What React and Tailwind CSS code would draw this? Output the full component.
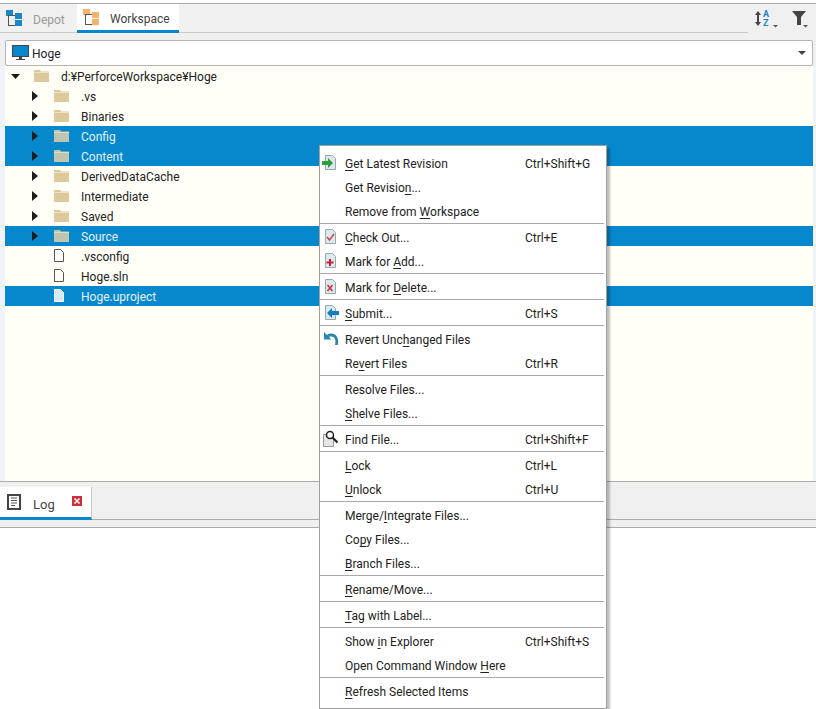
import React from "react";

/* tree rows */
const treeRows = [
  { name: ".vs", type: "folder" },
  { name: "Binaries", type: "folder" },
  { name: "Config", type: "folder", selected: true },
  { name: "Content", type: "folder", selected: true },
  { name: "DerivedDataCache", type: "folder" },
  { name: "Intermediate", type: "folder" },
  { name: "Saved", type: "folder" },
  { name: "Source", type: "folder", selected: true },
  { name: ".vsconfig", type: "file" },
  { name: "Hoge.sln", type: "file" },
  { name: "Hoge.uproject", type: "file", selected: true },
];

/* menu: "&" marks the underlined letter, null is a separator */
const menuItems = [
  { label: "&Get Latest Revision", keys: "Ctrl+Shift+G", icon: "latest" },
  { label: "Get Revisio&n..." },
  { label: "Remove from &Workspace" },
  null,
  { label: "&Check Out...", keys: "Ctrl+E", icon: "checkout" },
  { label: "Mark for &Add...", icon: "add" },
  null,
  { label: "Mark for &Delete...", icon: "delete" },
  null,
  { label: "&Submit...", keys: "Ctrl+S", icon: "submit" },
  null,
  { label: "Revert Unc&hanged Files", icon: "undo" },
  { label: "Re&vert Files", keys: "Ctrl+R" },
  null,
  { label: "Resolve Files..." },
  { label: "&Shelve Files..." },
  null,
  { label: "Find File...", keys: "Ctrl+Shift+F", icon: "find" },
  null,
  { label: "&Lock", keys: "Ctrl+L" },
  { label: "&Unlock", keys: "Ctrl+U" },
  null,
  { label: "Merge/&Integrate Files..." },
  { label: "Co&py Files..." },
  { label: "&Branch Files..." },
  null,
  { label: "&Rename/Move..." },
  null,
  { label: "&Tag with Label..." },
  null,
  { label: "Show &in Explorer", keys: "Ctrl+Shift+S" },
  { label: "Open Command Window &Here" },
  null,
  { label: "&Refresh Selected Items" },
];

function Mnemonic({ text }) {
  const at = text.indexOf("&");
  if (at < 0) return <span>{text}</span>;
  return (
    <span>
      {text.slice(0, at)}
      <u className="underline-offset-2">{text[at + 1]}</u>
      {text.slice(at + 2)}
    </span>
  );
}

function TreeIcon({ color }) {
  return (
    <svg width="17" height="17" viewBox="0 0 17 17" className="shrink-0">
      <rect x="0" y="0" width="7" height="6" fill={color} />
      <rect x="2" y="6" width="1" height="10" fill="#555" />
      <rect x="2" y="5" width="7" height="1" fill="#555" />
      <rect x="2" y="15" width="7" height="1" fill="#555" />
      <rect x="9" y="3" width="7" height="6" fill={color} />
      <rect x="9" y="10" width="7" height="6" fill={color} />
    </svg>
  );
}

function Folder({ selected }) {
  return (
    <svg width="15" height="12" viewBox="0 0 15 12" className="shrink-0">
      <path d="M0 0h6l1 1.500h8V12H0z" fill={selected ? "#c0c5b0" : "#dcc99c"} />
      <rect x="0" y="2" width="15" height="1" fill={selected ? "#d8dccb" : "#efe3c4"} />
    </svg>
  );
}

function FileIcon({ selected }) {
  return (
    <svg width="10" height="13" viewBox="0 0 10 13" className="shrink-0">
      <path
        d="M.5.5h6l3 3v9h-9z"
        fill={selected ? "#d6ebfa" : "#fffff8"}
        stroke={selected ? "#f2f8fc" : "#555"}
      />
    </svg>
  );
}

function Page({ children }) {
  return (
    <>
      <path d="M3.500 1.500h7l3 3v11h-10z" fill="#dbe8ee" stroke="#9aa9ae" />
      {children}
    </>
  );
}

function MenuIcon({ name }) {
  return (
    <svg width="18" height="18" viewBox="0 0 18 18" className="shrink-0">
      {name === "latest" && (
        <Page>
          <path d="M0 7h6V4l5 5-5 5v-3H0z" fill="#2e9e3a" />
        </Page>
      )}
      {name === "checkout" && (
        <Page>
          <path d="M5 9l2.500 3L12 6" fill="none" stroke="#c94a4a" strokeWidth="1.600" />
        </Page>
      )}
      {name === "add" && (
        <Page>
          <path d="M7 7h2v2.500h2.500v2H9V14H7v-2.500H4.500v-2H7z" fill="#cc2030" />
        </Page>
      )}
      {name === "delete" && (
        <Page>
          <path d="M5.500 7l5 6m0-6l-5 6" stroke="#cc3038" strokeWidth="1.500" fill="none" />
        </Page>
      )}
      {name === "submit" && (
        <Page>
          <path d="M17 7h-7V4L5 9l5 5v-3h7z" fill="#1180c0" />
        </Page>
      )}
      {name === "undo" && (
        <path
          d="M2 2v7.500h7.500L7 7c2.500-1 5-.2 6 2 .6 1.500.6 3.500 0 6h2.800c.8-3.500.5-6.800-1.500-9.300C12 3 8 2.800 5 5z"
          fill="#2a86ad"
        />
      )}
      {name === "find" && (
        <>
          <path d="M1.500 4.500h10v12h-10z" fill="#e6e6e6" stroke="#999" />
          <circle cx="8" cy="5" r="3.500" fill="#fff" stroke="#222" strokeWidth="1.500" />
          <path d="M10.500 7.500l5 5" stroke="#222" strokeWidth="2.200" />
        </>
      )}
    </svg>
  );
}

function ContextMenu() {
  return (
    <div className="absolute left-[319px] top-[145px] w-[288px] h-[564px] overflow-hidden bg-white border border-[#a0a0a0] py-[5px] text-[12px] text-[#222] shadow-[3px_3px_2px_rgba(0,0,0,0.25)]">
      {menuItems.map((item, i) =>
        item === null ? (
          <div key={i} className="h-[2px] mr-[2px] border-t border-[#a9a9a9]" />
        ) : (
          <div key={i} className="h-[24px] flex items-center">
            <div className="w-[25px] pl-[2px] shrink-0 flex items-center">
              {item.icon && <MenuIcon name={item.icon} />}
            </div>
            <div className="flex-1 whitespace-nowrap pt-[2px]">
              <Mnemonic text={item.label} />
            </div>
            <div className="w-[81px] shrink-0 whitespace-nowrap pt-[2px]">{item.keys}</div>
          </div>
        )
      )}
    </div>
  );
}

function TreeRow({ row }) {
  return (
    <div className={`h-[20px] flex items-center ${row.selected ? "bg-[#0787cc] text-[#e4f2fb]" : "text-[#222]"}`}>
      <div className="w-[33px] shrink-0 flex justify-end">
        {row.type === "folder" && (
          <svg width="6" height="10" viewBox="0 0 6 10">
            <path d="M0 0l6 5-6 5z" fill="#1c1c1c" />
          </svg>
        )}
      </div>
      <div className="w-[43px] shrink-0 flex items-center pl-[16px]">
        {row.type === "folder" ? (
          <Folder selected={row.selected} />
        ) : (
          <span className="mb-[2px]">
            <FileIcon selected={row.selected} />
          </span>
        )}
      </div>
      <span className="pt-[2px]">{row.name}</span>
    </div>
  );
}

export default function App() {
  return (
    <div
      className="relative w-[816px] h-[709px] overflow-hidden bg-white text-[12px] leading-none"
      style={{ fontFamily: 'Roboto, "Noto Sans", sans-serif' }}
    >
      <div className="h-[3px] bg-white" />
      <div className="h-[1px] bg-[#ababab]" />

      {/* TABS */}
      <div className="h-[29px] bg-[#f0f0f0] flex relative border-b border-[#c8c8c8]">
        <div className="w-[77px] h-[28px] pl-[6px] flex items-center gap-[10px] text-[#9a9a9a]">
          <TreeIcon color="#1a87c9" />
          <span className="pt-[4px]">Depot</span>
        </div>
        <div className="w-[102px] h-[29px] bg-white flex items-center gap-[10px] pl-[6px] border-b-[3px] border-[#0787cc] text-[#444]">
          <TreeIcon color="#f5b26b" />
          <span className="pt-[4px]">Workspace</span>
        </div>
        <div className="flex-1" />
        <div className="w-[68px] h-[29px] bg-[#f0f0f0] flex items-center pl-[7px] gap-[13px] absolute right-0 top-0">
          <svg width="24" height="20" viewBox="0 0 24 20" className="mt-[3px]">
            <path d="M3 1L0 5h2v7H0l3 4 3-4H4V5h2z" fill="#444" />
            <text x="8" y="7" fontSize="9" fontWeight="700" fill="#1a87c9">A</text>
            <text x="8" y="16" fontSize="9" fontWeight="700" fill="#1a87c9">Z</text>
            <path d="M18 15h5l-2.500 2.500z" fill="#555" />
          </svg>
          <svg width="18" height="20" viewBox="0 0 18 20" className="mt-[3px]">
            <path d="M0 1h14L9 7v8H5V7z" fill="#444" />
            <path d="M11 15h5l-2.500 2.500z" fill="#555" />
          </svg>
        </div>
      </div>
      <div className="h-[7px] bg-[#f0f0f0]" />

      {/* WORKSPACE COMBO */}
      <div className="h-[26px] bg-[#f0f0f0] pl-[5px] pr-[3px]">
        <div className="h-[26px] bg-white border border-[#b5b5b5] rounded-[2px] flex items-center pl-[6px] pr-[6px] gap-[3px] text-[#222]">
          <svg width="17" height="16" viewBox="0 0 17 16" className="shrink-0">
            <rect x="0.500" y="0.500" width="16" height="11" fill="#0787cc" stroke="#444" />
            <rect x="7" y="12" width="3" height="2" fill="#444" />
            <rect x="4" y="14" width="9" height="1" fill="#444" />
          </svg>
          <span className="flex-1 pt-[2px]">Hoge</span>
          <svg width="8" height="4" viewBox="0 0 8 4">
            <path d="M0 0h8L4 4z" fill="#444" />
          </svg>
        </div>
      </div>

      {/* TREE */}
      <div className="h-[416px] bg-[#f0f4fa] pl-[5px] pr-[3px] border-b border-[#ababab]">
        <div className="h-full bg-[#fffff8]">
          <div className="h-[20px] flex items-center text-[#222]">
            <div className="w-[15px] shrink-0 flex justify-end">
              <svg width="9" height="5" viewBox="0 0 9 5">
                <path d="M0 0h9L4.500 5z" fill="#1c1c1c" />
              </svg>
            </div>
            <div className="w-[41px] shrink-0 pl-[14px]">
              <Folder />
            </div>
            <span className="pt-[2px]">d:¥PerforceWorkspace¥Hoge</span>
          </div>
          {treeRows.map((row) => (
            <TreeRow key={row.name} row={row} />
          ))}
        </div>
      </div>

      {/* LOG PANEL */}
      <div className="h-[5px] bg-[#f0f0f0]" />
      <div className="h-[33px] bg-[#f0f0f0] border-b border-[#ababab]">
        <div className="w-[92px] h-[33px] bg-white border-r border-[#c8c8c8] border-b-[3px] border-b-[#0787cc] flex items-center pl-[7px]">
          <svg width="14" height="16" viewBox="0 0 14 16" className="shrink-0">
            <rect x="1" y="1" width="12" height="14" fill="#fff" stroke="#444" strokeWidth="2" />
            <path d="M4 4h6M4 6.500h6M4 9h6M4 11.500h4" stroke="#555" />
          </svg>
          <span className="ml-[12px] pt-[4px] text-[#444] text-[13px]">Log</span>
          <svg width="10" height="10" viewBox="0 0 10 10" className="ml-[17px] mb-[3px] shrink-0">
            <rect width="10" height="10" fill="#cc3038" />
            <path d="M2.500 2.500l5 5m0-5l-5 5" stroke="#fff" strokeWidth="1.500" />
          </svg>
        </div>
      </div>
      <div className="h-[8px] bg-[#f0f0f0] border-b border-[#ababab]" />

      <ContextMenu />
    </div>
  );
}
